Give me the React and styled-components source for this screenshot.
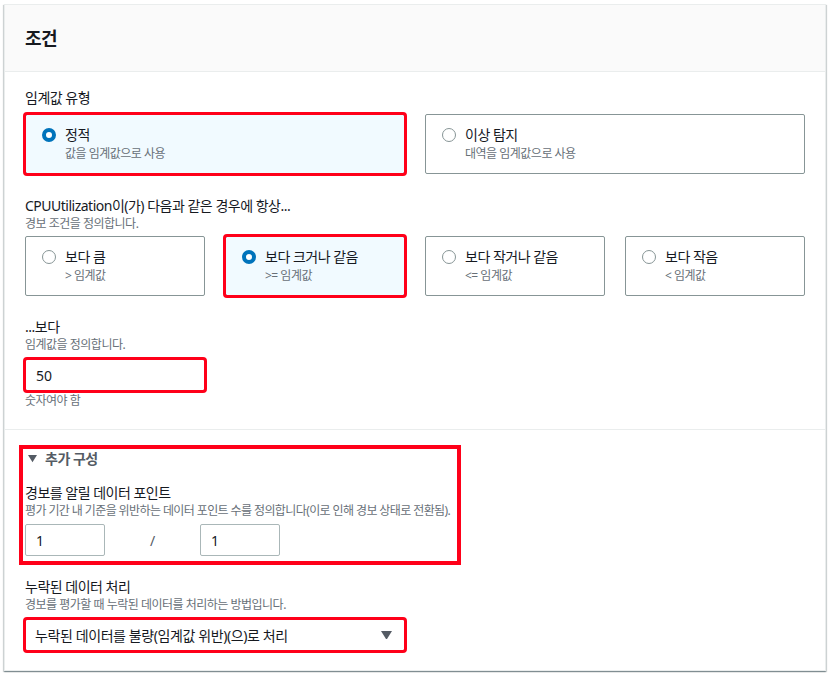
import React from "react";
import styled, { createGlobalStyle } from "styled-components";

const Global = createGlobalStyle`
  html, body { margin: 0; padding: 0; background: #ffffff; }
  body {
    font-family: "Noto Sans", "Noto Sans CJK KR", sans-serif;
    color: #16191f;
    -webkit-font-smoothing: antialiased;
  }
  * { box-sizing: border-box; }
`;

const Page = styled.div`
  padding: 4px 5px 6px 4px;
  width: 831px;
`;

const Panel = styled.section`
  width: 822px;
  background: #fff;
  border: 1px solid #eaeded;
  box-shadow: 0 1px 1px 0 rgba(0, 28, 36, 0.3), 1px 1px 1px 0 rgba(0, 28, 36, 0.15),
    -1px 1px 1px 0 rgba(0, 28, 36, 0.15);
`;

const Header = styled.header`
  height: 67px;
  background: #fafafa;
  border-bottom: 1px solid #eaeded;
  display: flex;
  align-items: center;
  padding: 0 20px;
  h2 {
    margin: 0;
    font-size: 18px;
    font-weight: 700;
    line-height: 22px;
    color: #16191f;
    letter-spacing: -0.5px;
  }
`;

const Body = styled.div`
  padding: ${(p) => p.$pad || "16px 20px 20px 20px"};
  display: flex;
  flex-direction: column;
  border-top: ${(p) => (p.$divider ? "1px solid #eaeded" : "none")};
`;

const Field = styled.div`
  display: flex;
  flex-direction: column;
  margin-top: ${(p) => p.$mt || 0}px;
`;

const Label = styled.div`
  font-size: 14px;
  line-height: 20px;
  color: #16191f;
  letter-spacing: -0.5px;
`;

const Desc = styled.div`
  font-size: 12px;
  line-height: 16px;
  color: #687078;
  letter-spacing: ${(p) => p.$ls || "-0.5px"};
  white-space: nowrap;
  margin-top: ${(p) => p.$mt || 0}px;
`;

const TileGrid = styled.div`
  display: grid;
  grid-template-columns: repeat(${(p) => p.$cols}, 1fr);
  column-gap: 20px;
  margin-top: ${(p) => p.$mt || 0}px;
`;

const Tile = styled.div`
  height: 60px;
  display: flex;
  align-items: flex-start;
  padding: 10px 16px 0 16px;
  gap: 9px;
  border: 1px solid ${(p) => (p.$selected ? "#0073bb" : "#879596")};
  background: ${(p) => (p.$selected ? "#f1faff" : "#fff")};
  border-radius: 2px;
  outline: ${(p) => (p.$mark ? "3px solid #ff0019" : "none")};
  outline-offset: -1px;
`;

const Radio = styled.span`
  flex: none;
  width: 14px;
  height: 14px;
  margin-top: 3px;
  border-radius: 50%;
  border: ${(p) => (p.$checked ? "4px solid #0073bb" : "1px solid #879596")};
  background: #fff;
`;

const TileText = styled.div`
  display: flex;
  flex-direction: column;
  letter-spacing: -0.5px;
  .t { font-size: 14px; line-height: 20px; color: #16191f; }
  .d { font-size: 12px; line-height: 18px; color: #687078; }
`;

const TextInput = styled.div`
  width: ${(p) => p.$w}px;
  height: 32px;
  border: 1px solid #aab7b8;
  border-radius: 2px;
  display: flex;
  align-items: center;
  padding: 0 10px;
  font-size: 14px;
  color: #16191f;
  background: #fff;
  outline: ${(p) => (p.$mark ? "3px solid #ff0019" : "none")};
  outline-offset: -1px;
`;

const Marked = styled.div`
  width: 442px;
  border: 4px solid #ff0019;
  margin-left: -6px;
  padding: 0 0 0 2px;
  display: flex;
  flex-direction: column;
`;

const ExpandHead = styled.div`
  display: flex;
  align-items: center;
  gap: 8px;
  padding-left: 3px;
  font-size: 14px;
  line-height: 20px;
  font-weight: 700;
  letter-spacing: -0.5px;
  color: #545b64;
  svg { flex: none; }
`;

const PointsRow = styled.div`
  display: flex;
  align-items: center;
  margin-top: 5px;
  margin-bottom: 5px;
  span.slash {
    width: 95px;
    text-align: center;
    font-size: 14px;
    color: #545b64;
  }
`;

const Select = styled.div`
  width: 380px;
  height: 32px;
  margin-top: 6px;
  border: 1px solid #aab7b8;
  border-radius: 2px;
  display: flex;
  align-items: center;
  justify-content: space-between;
  padding: 0 12px 0 9px;
  font-size: 14px;
  letter-spacing: -0.4px;
  color: #16191f;
  outline: 3px solid #ff0019;
  outline-offset: -1px;
`;

const Caret = ({ size = 10, color = "#545b64" }) => (
  <svg width={size} height={size * 0.8} viewBox="0 0 10 8">
    <path d="M0 0 L10 0 L5 8 Z" fill={color} />
  </svg>
);

const TileItem = ({ title, desc, selected, mark }) => (
  <Tile $selected={selected} $mark={mark}>
    <Radio $checked={selected} />
    <TileText>
      <span className="t">{title}</span>
      <span className="d">{desc}</span>
    </TileText>
  </Tile>
);

export default function App() {
  return (
    <>
      <Global />
      <Page>
        <Panel>
          <Header>
            <h2>조건</h2>
          </Header>
          <Body>
            <Field>
              <Label>임계값 유형</Label>
              <TileGrid $cols={2} $mt={6}>
                <TileItem title="정적" desc="값을 임계값으로 사용" selected mark />
                <TileItem title="이상 탐지" desc="대역을 임계값으로 사용" />
              </TileGrid>
            </Field>
            <Field $mt={22}>
              <Label>CPUUtilization이(가) 다음과 같은 경우에 항상...</Label>
              <Desc>경보 조건을 정의합니다.</Desc>
              <TileGrid $cols={4} $mt={4}>
                <TileItem title="보다 큼" desc="> 임계값" />
                <TileItem title="보다 크거나 같음" desc=">= 임계값" selected mark />
                <TileItem title="보다 작거나 같음" desc="<= 임계값" />
                <TileItem title="보다 작음" desc="< 임계값" />
              </TileGrid>
            </Field>
            <Field $mt={21}>
              <Label>...보다</Label>
              <Desc>임계값을 정의합니다.</Desc>
              <Field $mt={6}>
                <TextInput $w={180} $mark>50</TextInput>
              </Field>
              <Desc $mt={2}>숫자여야 함</Desc>
            </Field>
          </Body>
          <Body $divider $pad="15px 20px 19px 20px">
            <Marked>
              <ExpandHead>
                <Caret size={9} color="#545b64" />
                <span>추가 구성</span>
              </ExpandHead>
              <Field $mt={14}>
                <Label>경보를 알릴 데이터 포인트</Label>
                <Desc $ls="-0.6px">
                  평가 기간 내 기준을 위반하는 데이터 포인트 수를 정의합니다(이로 인해 경보 상태로 전환됨).
                </Desc>
                <PointsRow>
                  <TextInput $w={80}>1</TextInput>
                  <span className="slash">/</span>
                  <TextInput $w={80}>1</TextInput>
                </PointsRow>
              </Field>
            </Marked>
            <Field $mt={12}>
              <Label>누락된 데이터 처리</Label>
              <Desc>경보를 평가할 때 누락된 데이터를 처리하는 방법입니다.</Desc>
              <Select>
                <span>누락된 데이터를 불량(임계값 위반)(으)로 처리</span>
                <Caret size={11} />
              </Select>
            </Field>
          </Body>
        </Panel>
      </Page>
    </>
  );
}
